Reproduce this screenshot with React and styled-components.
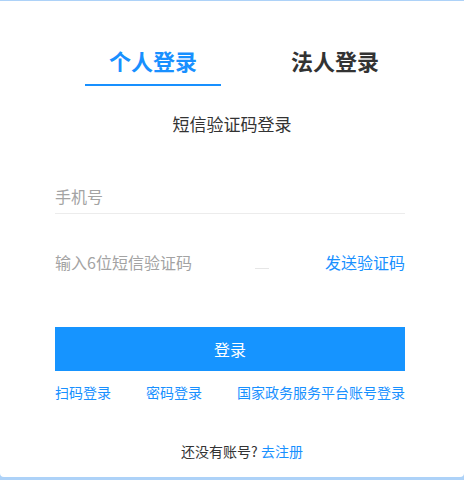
import React from "react";
import styled, { createGlobalStyle } from "styled-components";

const Global = createGlobalStyle`
  html, body { margin: 0; padding: 0; background: #add2f8; }
  body { font-family: "Noto Sans CJK SC", "Noto Sans", sans-serif; }
  * { box-sizing: border-box; }
`;

const Card = styled.div`
  margin-top: 1px;
  width: 464px;
  height: 476px;
  background: #fff;
  border-radius: 0 0 4px 4px;
  padding-top: 44px;
`;

const Tabs = styled.div`
  display: flex;
  gap: 46px;
  padding-left: 85px;
`;

const Tab = styled.div`
  width: 136px;
  text-align: center;
  font-size: 22px;
  font-weight: 700;
  line-height: 30px;
  padding-bottom: 9px;
  color: ${(p) => (p.$active ? "#1890ff" : "#333")};
  border-bottom: 2px solid ${(p) => (p.$active ? "#1890ff" : "transparent")};
  cursor: pointer;
`;

const Subtitle = styled.div`
  margin-top: 26px;
  text-align: center;
  font-size: 17px;
  line-height: 24px;
  color: #333;
`;

const Form = styled.div`
  margin-left: 55px;
  width: 350px;
`;

const Field = styled.div`
  display: flex;
  align-items: center;
  margin-top: ${(p) => p.$mt}px;
  padding-bottom: ${(p) => p.$pb}px;
  border-bottom: 1px solid ${(p) => (p.$line ? "#ececec" : "transparent")};
`;

const Input = styled.input`
  border: 0;
  outline: 0;
  padding: 0;
  height: 24px;
  font-family: inherit;
  font-size: 16px;
  color: #333;
  width: ${(p) => p.$w || "100%"};
  background: transparent;
  &::placeholder { color: #a3a3a3; }
`;

const Divider = styled.span`
  width: 14px;
  height: 1px;
  background: #e6e6e6;
  align-self: flex-end;
  margin-bottom: 5px;
`;

const SendLink = styled.a`
  margin-left: auto;
  font-size: 16px;
  line-height: 24px;
  color: #1890ff;
  cursor: pointer;
`;

const Submit = styled.button`
  display: block;
  width: 350px;
  height: 44px;
  margin-top: 50px;
  border: 0;
  background: #1694ff;
  color: #fff;
  font-family: inherit;
  font-size: 16px;
  cursor: pointer;
`;

const Links = styled.div`
  margin-top: 11px;
  display: flex;
  justify-content: space-between;
`;

const Link = styled.a`
  font-size: 14px;
  line-height: 20px;
  color: #1890ff;
  cursor: pointer;
`;

const Register = styled.div`
  margin-top: 39px;
  text-align: center;
  padding-left: 24px;
  font-size: 14px;
  line-height: 20px;
  color: #333;
`;

export default function App() {
  return (
    <>
      <Global />
      <Card>
        <Tabs>
          <Tab $active>个人登录</Tab>
          <Tab>法人登录</Tab>
        </Tabs>
        <Subtitle>短信验证码登录</Subtitle>
        <Form>
          <Field $mt={48} $pb={5} $line>
            <Input placeholder="手机号" />
          </Field>
          <Field $mt={36} $pb={2}>
            <Input $w="200px" placeholder="输入6位短信验证码" />
            <Divider />
            <SendLink>发送验证码</SendLink>
          </Field>
          <Submit>登录</Submit>
          <Links>
            <Link>扫码登录</Link>
            <Link>密码登录</Link>
            <Link>国家政务服务平台账号登录</Link>
          </Links>
          <Register>
            还没有账号? <Link>去注册</Link>
          </Register>
        </Form>
      </Card>
    </>
  );
}
